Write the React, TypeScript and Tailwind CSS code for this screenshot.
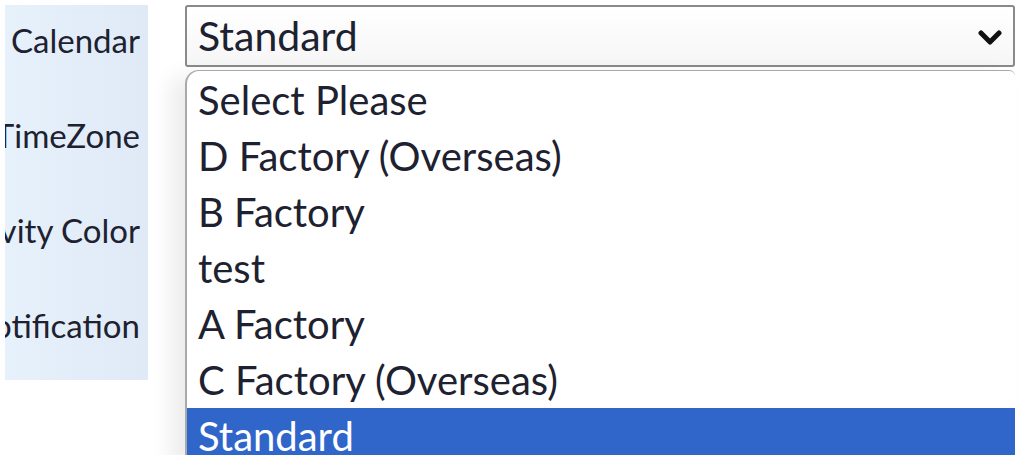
import { useState } from 'react'

const LABELS = ['Calendar', 'TimeZone', 'Activity Color', 'Notification']

const OPTIONS = [
  'Select Please',
  'D Factory (Overseas)',
  'B Factory',
  'test',
  'A Factory',
  'C Factory (Overseas)',
  'Standard',
]

export default function App() {
  const [selected, setSelected] = useState('Standard')

  return (
    <div className="w-[1024px] h-[455px] overflow-hidden bg-white flex items-start pt-[5px] font-['Lato','Noto_Sans',sans-serif] text-[#1d2130]">
      <div className="ml-[5px] w-[143px] h-[375px] bg-gradient-to-r from-[#e6f1fc] to-[#dfeaf6] flex flex-col items-end pr-[8px] overflow-hidden">
        {LABELS.map((label) => (
          <div key={label} className="h-[95px] shrink-0 flex items-center whitespace-nowrap text-[33px] first:mt-[-12px]">
            {label}
          </div>
        ))}
      </div>

      <div className="ml-[37px] w-[830px] flex flex-col">
        <div className="h-[62px] rounded-[3px] border-2 border-[#8a8a8a] bg-gradient-to-b from-white to-[#f6f6f6] flex items-center justify-between pl-[11px] pr-[11px] text-[41px]">
          <span>{selected}</span>
          <svg width="24" height="17" viewBox="0 0 24 17" className="mt-[2px]">
            <polyline points="3,4 12,13 21,4" fill="none" stroke="#111" strokeWidth="5" strokeLinecap="round" strokeLinejoin="round" />
          </svg>
        </div>

        <ul className="mt-[3px] h-[400px] rounded-tl-[14px] rounded-tr-[6px] border-l-2 border-t border-[#a9a9a9] bg-white shadow-[-14px_6px_22px_rgba(0,0,0,0.08)] overflow-hidden text-[40px]">
          {OPTIONS.map((opt) => (
            <li
              key={opt}
              onClick={() => setSelected(opt)}
              className={
                opt === selected
                  ? 'h-[56px] flex items-center pl-[11px] bg-[#3066c9] text-white'
                  : 'h-[56px] flex items-center pl-[11px] first:h-[57px]'
              }
            >
              {opt}
            </li>
          ))}
        </ul>
      </div>
    </div>
  )
}
